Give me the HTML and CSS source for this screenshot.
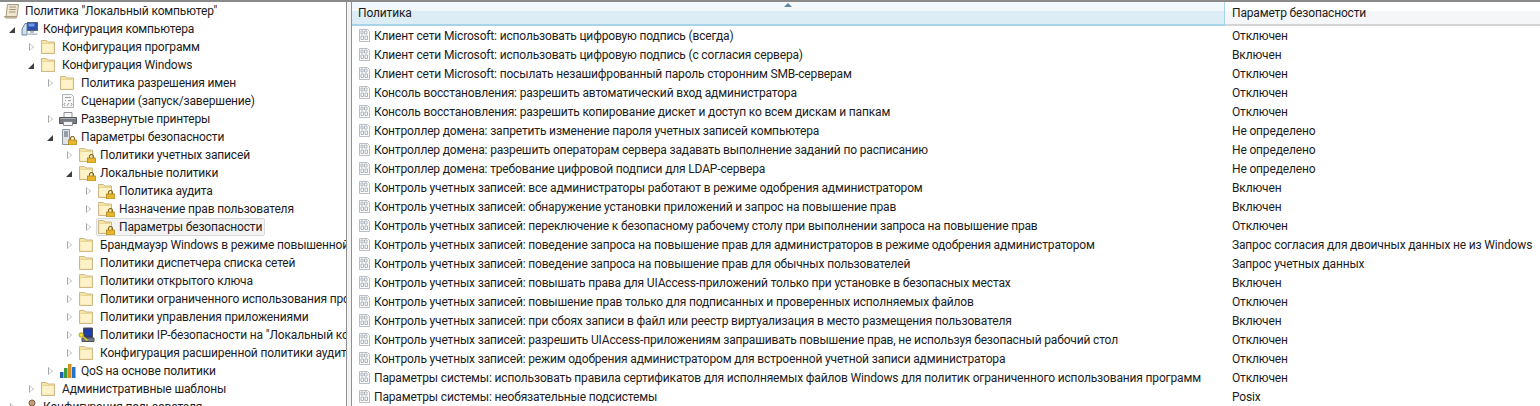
FILE: index.html
```html
<!DOCTYPE html>
<html lang="ru">
<head>
<meta charset="utf-8">
<title>Политика "Локальный компьютер"</title>
<link rel="stylesheet" href="styles.css">
</head>
<body>
<svg class="defs" width="0" height="0" aria-hidden="true">
  <defs>
    <symbol id="i-folder" viewBox="0 0 16 16">
      <path d="M0.500 14.500V1.500h5l1.500 1.500h6.500v11.500z" fill="#f5e3a6" stroke="#cdb888"/>
      <path d="M1.500 13.500V4.500h11v9z" fill="#fdf2c8"/>
      <path d="M1.500 4.500h11" stroke="#e9d690" fill="none"/>
    </symbol>
    <symbol id="i-lock" viewBox="0 0 9 9">
      <path d="M2.500 4V2.500a2 2 0 0 1 4 0V4" fill="none" stroke="#8a6a20" stroke-width="1.200"/>
      <rect x="0.500" y="4" width="8" height="5" fill="#e8b62c" stroke="#a67c14" stroke-width="0.700"/>
    </symbol>
    <symbol id="i-leaf" viewBox="0 0 13 13">
      <path d="M1.500 0.500h8l2 2v10h-10z" fill="#fcfcfc" stroke="#b9bec4"/>
      <path d="M3 2h2v3H3zM6.500 2h2.500v3H6.500zM3 7h2.500v3.500H3zM7 7h2.500v3.500H7z" fill="none" stroke="#aeb5bc"/>
    </symbol>
    <symbol id="i-scroll" viewBox="0 0 16 16">
      <path d="M3.500 1.500h11l-1.500 12h-11z" fill="#efe6cf" stroke="#a59a7c"/>
      <path d="M5.500 4h6.500M5.300 6.500h6.500M5 9h6.500" stroke="#9c9278" fill="none"/>
      <path d="M0.500 13.500h11l1 1.500H1.500z" fill="#e3d6b3" stroke="#a59a7c"/>
    </symbol>
    <symbol id="i-computer" viewBox="0 0 18 16">
      <path d="M4 2.500h2v11.500H1V8z" fill="#cfe0ee" stroke="#6d86a0"/>
      <rect x="6.500" y="1.500" width="10" height="8" fill="#2a4fae" stroke="#58626e"/>
      <path d="M7.500 2.500h6v3h-6z" fill="#6f9be4"/>
      <path d="M9 10h4v2H9zM6.500 12.500h10v1.500h-10z" fill="#b3bdc7"/>
    </symbol>
    <symbol id="i-script" viewBox="0 0 16 16">
      <path d="M2.500 1.500h9l2 2v11h-11z" fill="#f6f6f6" stroke="#b0b2b4"/>
      <path d="M5 4.500h6M8 7.500h3M5 7.500h1M5 10l-1 1.500 1 1.500M11 10l1 1.500-1 1.500M7 13l2-3" stroke="#9a9fa3" fill="none"/>
    </symbol>
    <symbol id="i-printer" viewBox="0 0 18 16">
      <path d="M5 1.500h8v5H5z" fill="#f8f8f8" stroke="#8b8f94"/>
      <path d="M0.500 6.500h17v6h-17z" fill="#767c82" stroke="#54595f"/>
      <path d="M1.500 7.500h15" stroke="#a8adb2"/>
      <path d="M4.500 10.500h9v4h-9z" fill="#f4f4f4" stroke="#85898e"/>
    </symbol>
    <symbol id="i-secset" viewBox="0 0 16 16">
      <path d="M2.500 0.500h7v15h-7z" fill="#dde3e8" stroke="#8a949c"/>
      <path d="M4 3h4M4 5h4M4 7h4" stroke="#4a5a68" fill="none"/>
    </symbol>
    <symbol id="i-ipsec" viewBox="0 0 18 16">
      <path d="M5.500 1h9v9.500h-9z" fill="#2e3a72" stroke="#4a4f57"/>
      <path d="M7 2.500h6v6H7z" fill="#1d3fb6"/>
      <path d="M4 11h12v3.500H4z" fill="#77808a" stroke="#4a4f57"/>
      <circle cx="3.200" cy="8" r="2.200" fill="#f2e23a" stroke="#b7a01c"/>
      <path d="M5 9.500l4.500 4" stroke="#e3cd2a" stroke-width="1.500"/>
    </symbol>
    <symbol id="i-qos" viewBox="0 0 16 16">
      <path d="M0 9h3.500v6H0z" fill="#1f5fb4"/>
      <path d="M4 5h3.500v10H4z" fill="#3f9b3c"/>
      <path d="M8 1h3.500v14H8z" fill="#d88f1e"/>
      <path d="M12 4h3.500v11H12z" fill="#2472c8"/>
    </symbol>
    <symbol id="i-user" viewBox="0 0 18 16">
      <circle cx="11" cy="4" r="3" fill="#c79a72" stroke="#7a5f47"/>
      <path d="M5 15c0-5 3-6.500 6-6.500s6 1.500 6 6.500z" fill="#5b7ea8" stroke="#3f5a7c"/>
    </symbol>
  </defs>
</svg>

<div class="window">
  <nav class="tree">
    <div class="node root"><svg class="ico"><use href="#i-scroll"/></svg><span class="label">Политика "Локальный компьютер"</span></div>
    <div class="node l1"><i class="tw open"></i><svg class="ico wide"><use href="#i-computer"/></svg><span class="label">Конфигурация компьютера</span></div>
    <div class="node l2"><i class="tw"></i><svg class="ico"><use href="#i-folder"/></svg><span class="label">Конфигурация программ</span></div>
    <div class="node l2"><i class="tw open"></i><svg class="ico"><use href="#i-folder"/></svg><span class="label">Конфигурация Windows</span></div>
    <div class="node l3"><i class="tw"></i><svg class="ico"><use href="#i-folder"/></svg><span class="label">Политика разрешения имен</span></div>
    <div class="node l3"><i class="tw none"></i><svg class="ico"><use href="#i-script"/></svg><span class="label">Сценарии (запуск/завершение)</span></div>
    <div class="node l3"><i class="tw"></i><svg class="ico wide"><use href="#i-printer"/></svg><span class="label">Развернутые принтеры</span></div>
    <div class="node l3"><i class="tw open"></i><span class="locked"><svg class="ico"><use href="#i-secset"/></svg><svg class="lock"><use href="#i-lock"/></svg></span><span class="label">Параметры безопасности</span></div>
    <div class="node l4"><i class="tw"></i><span class="locked"><svg class="ico"><use href="#i-folder"/></svg><svg class="lock"><use href="#i-lock"/></svg></span><span class="label">Политики учетных записей</span></div>
    <div class="node l4"><i class="tw open"></i><span class="locked"><svg class="ico"><use href="#i-folder"/></svg><svg class="lock"><use href="#i-lock"/></svg></span><span class="label">Локальные политики</span></div>
    <div class="node l5"><i class="tw"></i><span class="locked"><svg class="ico"><use href="#i-folder"/></svg><svg class="lock"><use href="#i-lock"/></svg></span><span class="label">Политика аудита</span></div>
    <div class="node l5"><i class="tw"></i><span class="locked"><svg class="ico"><use href="#i-folder"/></svg><svg class="lock"><use href="#i-lock"/></svg></span><span class="label">Назначение прав пользователя</span></div>
    <div class="node l5"><i class="tw"></i><span class="sel"><span class="locked"><svg class="ico"><use href="#i-folder"/></svg><svg class="lock"><use href="#i-lock"/></svg></span><span class="label">Параметры безопасности</span></span></div>
    <div class="node l4"><i class="tw"></i><svg class="ico"><use href="#i-folder"/></svg><span class="label">Брандмауэр Windows в режиме повышенной безопасности</span></div>
    <div class="node l4"><i class="tw none"></i><svg class="ico"><use href="#i-folder"/></svg><span class="label">Политики диспетчера списка сетей</span></div>
    <div class="node l4"><i class="tw"></i><svg class="ico"><use href="#i-folder"/></svg><span class="label">Политики открытого ключа</span></div>
    <div class="node l4"><i class="tw"></i><svg class="ico"><use href="#i-folder"/></svg><span class="label">Политики ограниченного использования программ</span></div>
    <div class="node l4"><i class="tw"></i><svg class="ico"><use href="#i-folder"/></svg><span class="label">Политики управления приложениями</span></div>
    <div class="node l4"><i class="tw"></i><svg class="ico wide"><use href="#i-ipsec"/></svg><span class="label">Политики IP-безопасности на "Локальный компьютер"</span></div>
    <div class="node l4"><i class="tw"></i><svg class="ico"><use href="#i-folder"/></svg><span class="label">Конфигурация расширенной политики аудита</span></div>
    <div class="node l3"><i class="tw"></i><svg class="ico"><use href="#i-qos"/></svg><span class="label">QoS на основе политики</span></div>
    <div class="node l2"><i class="tw"></i><svg class="ico"><use href="#i-folder"/></svg><span class="label">Административные шаблоны</span></div>
    <div class="node l1"><i class="tw"></i><svg class="ico wide"><use href="#i-user"/></svg><span class="label">Конфигурация пользователя</span></div>
  </nav>

  <div class="gutter"></div>

  <section class="list">
    <header class="head">
      <div class="col col-sorted"><i class="sort"></i>Политика</div>
      <div class="col col-plain">Параметр безопасности</div>
    </header>
    <div class="row"><div class="name"><svg class="leaf"><use href="#i-leaf"/></svg>Клиент сети Microsoft: использовать цифровую подпись (всегда)</div><div class="val">Отключен</div></div>
    <div class="row"><div class="name"><svg class="leaf"><use href="#i-leaf"/></svg>Клиент сети Microsoft: использовать цифровую подпись (с согласия сервера)</div><div class="val">Включен</div></div>
    <div class="row"><div class="name"><svg class="leaf"><use href="#i-leaf"/></svg>Клиент сети Microsoft: посылать незашифрованный пароль сторонним SMB-серверам</div><div class="val">Отключен</div></div>
    <div class="row"><div class="name"><svg class="leaf"><use href="#i-leaf"/></svg>Консоль восстановления: разрешить автоматический вход администратора</div><div class="val">Отключен</div></div>
    <div class="row"><div class="name"><svg class="leaf"><use href="#i-leaf"/></svg>Консоль восстановления: разрешить копирование дискет и доступ ко всем дискам и папкам</div><div class="val">Отключен</div></div>
    <div class="row"><div class="name"><svg class="leaf"><use href="#i-leaf"/></svg>Контроллер домена: запретить изменение пароля учетных записей компьютера</div><div class="val">Не определено</div></div>
    <div class="row"><div class="name"><svg class="leaf"><use href="#i-leaf"/></svg>Контроллер домена: разрешить операторам сервера задавать выполнение заданий по расписанию</div><div class="val">Не определено</div></div>
    <div class="row"><div class="name"><svg class="leaf"><use href="#i-leaf"/></svg>Контроллер домена: требование цифровой подписи для LDAP-сервера</div><div class="val">Не определено</div></div>
    <div class="row"><div class="name"><svg class="leaf"><use href="#i-leaf"/></svg>Контроль учетных записей: все администраторы работают в режиме одобрения администратором</div><div class="val">Включен</div></div>
    <div class="row"><div class="name"><svg class="leaf"><use href="#i-leaf"/></svg>Контроль учетных записей: обнаружение установки приложений и запрос на повышение прав</div><div class="val">Включен</div></div>
    <div class="row"><div class="name"><svg class="leaf"><use href="#i-leaf"/></svg>Контроль учетных записей: переключение к безопасному рабочему столу при выполнении запроса на повышение прав</div><div class="val">Отключен</div></div>
    <div class="row"><div class="name"><svg class="leaf"><use href="#i-leaf"/></svg>Контроль учетных записей: поведение запроса на повышение прав для администраторов в режиме одобрения администратором</div><div class="val">Запрос согласия для двоичных данных не из Windows</div></div>
    <div class="row"><div class="name"><svg class="leaf"><use href="#i-leaf"/></svg>Контроль учетных записей: поведение запроса на повышение прав для обычных пользователей</div><div class="val">Запрос учетных данных</div></div>
    <div class="row"><div class="name"><svg class="leaf"><use href="#i-leaf"/></svg>Контроль учетных записей: повышать права для UIAccess-приложений только при установке в безопасных местах</div><div class="val">Включен</div></div>
    <div class="row"><div class="name"><svg class="leaf"><use href="#i-leaf"/></svg>Контроль учетных записей: повышение прав только для подписанных и проверенных исполняемых файлов</div><div class="val">Отключен</div></div>
    <div class="row"><div class="name"><svg class="leaf"><use href="#i-leaf"/></svg>Контроль учетных записей: при сбоях записи в файл или реестр виртуализация в место размещения пользователя</div><div class="val">Включен</div></div>
    <div class="row"><div class="name"><svg class="leaf"><use href="#i-leaf"/></svg>Контроль учетных записей: разрешить UIAccess-приложениям запрашивать повышение прав, не используя безопасный рабочий стол</div><div class="val">Отключен</div></div>
    <div class="row"><div class="name"><svg class="leaf"><use href="#i-leaf"/></svg>Контроль учетных записей: режим одобрения администратором для встроенной учетной записи администратора</div><div class="val">Отключен</div></div>
    <div class="row"><div class="name"><svg class="leaf"><use href="#i-leaf"/></svg>Параметры системы: использовать правила сертификатов для исполняемых файлов Windows для политик ограниченного использования программ</div><div class="val">Отключен</div></div>
    <div class="row"><div class="name"><svg class="leaf"><use href="#i-leaf"/></svg>Параметры системы: необязательные подсистемы</div><div class="val">Posix</div></div>
  </section>
</div>
</body>
</html>
```

FILE: styles.css
```css
html, body {
  margin: 0;
  height: 406px;
  overflow: hidden;
  background: #fff;
}
body {
  font-family: "Roboto", "Liberation Sans", sans-serif;
  font-size: 12px;
  letter-spacing: -0.16px;
  color: #1c1c1c;
}
.defs { display: block; height: 0; }
.window {
  display: flex;
  height: 404px;
  border-top: 2px solid #8a8a8a;
  overflow: hidden;
}
.tree {
  width: 346px;
  flex: none;
  overflow: hidden;
}
.gutter {
  width: 6px;
  flex: none;
  box-sizing: border-box;
  background: #f4f4f4;
  border-left: 1px solid #8f8f8f;
  border-right: 1px solid #8f8f8f;
}
.node {
  display: flex;
  align-items: center;
  height: 18px;
  white-space: nowrap;
  box-sizing: border-box;
  width: 346px;
}
.root { padding-left: 4px; }
.l1 { padding-left: 8px; }
.l2 { padding-left: 27px; }
.l3 { padding-left: 46px; }
.l4 { padding-left: 65px; }
.l5 { padding-left: 84px; }
.tw {
  display: block;
  flex: none;
  width: 9px;
  height: 9px;
  margin-right: 5px;
  position: relative;
}
.tw::before {
  content: "";
  position: absolute;
  left: 2px;
  top: 0;
  border-left: 5px solid #a6a6a6;
  border-top: 4.500px solid transparent;
  border-bottom: 4.500px solid transparent;
}
.tw::after {
  content: "";
  position: absolute;
  left: 3px;
  top: 1.500px;
  border-left: 3px solid #fff;
  border-top: 3px solid transparent;
  border-bottom: 3px solid transparent;
}
.tw.open::before {
  left: 1px;
  top: 2px;
  border: 0;
  border-bottom: 6px solid #404040;
  border-left: 6px solid transparent;
}
.tw.open::after { display: none; }
.tw.none::before, .tw.none::after { display: none; }
.ico {
  display: block;
  flex: none;
  width: 16px;
  height: 16px;
}
.ico.wide { width: 18px; margin-left: -1px; margin-right: -1px; }
.label {
  margin-left: 5px;
  min-width: 0;
  overflow: hidden;
}
.locked {
  display: block;
  position: relative;
  flex: none;
  width: 16px;
  height: 16px;
}
.lock {
  position: absolute;
  right: -1px;
  bottom: 0;
  width: 9px;
  height: 9px;
}
.sel {
  display: flex;
  align-items: center;
  height: 18px;
  margin-left: -2px;
  padding: 0 2px 0 1px;
  background: #f3f3f3;
  border: 1px solid #d9d9d9;
  border-radius: 2px;
  box-sizing: border-box;
}
.list {
  flex: 1;
  min-width: 0;
  overflow: hidden;
}
.head {
  display: flex;
  height: 24px;
}
.col {
  display: flex;
  align-items: center;
  box-sizing: border-box;
  height: 24px;
}
.col-sorted {
  position: relative;
  width: 873px;
  flex: none;
  padding-left: 6px;
  background: linear-gradient(#f2f9fd 0, #f2f9fd 40%, #dcedf6 42%, #dcedf6 100%);
  border-bottom: 2px solid #a7d4e9;
  border-right: 1px solid #a7d4e9;
}
.col-plain {
  flex: 1;
  padding-left: 7px;
  background: linear-gradient(#fff 0, #fff 40%, #f4f6f7 42%, #f4f6f7 100%);
  border-bottom: 2px solid #d5d5d5;
}
.sort {
  position: absolute;
  left: 432px;
  top: 1px;
  border-left: 4px solid transparent;
  border-right: 4px solid transparent;
  border-bottom: 4px solid #5b87a6;
}
.row {
  display: flex;
  align-items: center;
  height: 19px;
  white-space: nowrap;
}
.name {
  display: flex;
  align-items: center;
  width: 873px;
  flex: none;
  padding-left: 6px;
  box-sizing: border-box;
  overflow: hidden;
}
.leaf {
  display: block;
  flex: none;
  width: 13px;
  height: 13px;
  margin-right: 3px;
}
.val { padding-left: 7px; }
```
